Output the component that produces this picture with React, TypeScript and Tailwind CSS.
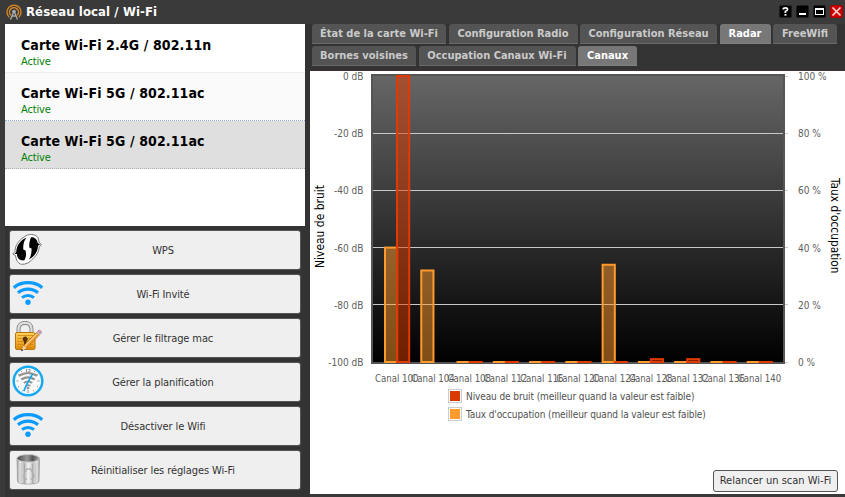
import type { ReactNode } from 'react';

interface Channel {
    name: string;
    noise: number | null; // % of the plot height
    usage: number;
}

const channels: Channel[] = [
    { name: 'Canal 100', noise: 100, usage: 40 },
    { name: 'Canal 104', noise: null, usage: 32 },
    { name: 'Canal 108', noise: 0, usage: 0 },
    { name: 'Canal 112', noise: 0, usage: 0 },
    { name: 'Canal 116', noise: 0, usage: 0 },
    { name: 'Canal 120', noise: 0, usage: 0 },
    { name: 'Canal 124', noise: 0, usage: 34 },
    { name: 'Canal 128', noise: 1, usage: 0 },
    { name: 'Canal 132', noise: 1, usage: 0 },
    { name: 'Canal 136', noise: 0, usage: 0 },
    { name: 'Canal 140', noise: 0, usage: 0 },
];

const cards = [
    { name: 'Carte Wi-Fi 2.4G / 802.11n', row: 'bg-white border-b border-solid border-[#ededed]' },
    { name: 'Carte Wi-Fi 5G / 802.11ac', row: 'bg-[#fafafa] border-b border-dotted border-[#8fb0e8]' },
    { name: 'Carte Wi-Fi 5G / 802.11ac', row: 'bg-[#dfdfdf] border-b border-dotted border-[#b0b0b0]' },
];

const WifiIcon = () => (
    <svg width="32" height="32" viewBox="0 0 32 32" fill="none" stroke="#0c9bff" className="block">
        <path d="M1.800 10.700C9.300 4 22.700 4 30.200 10.700" strokeWidth="3.300" />
        <path d="M6 15.800C12 10.900 20 10.900 26 15.800" strokeWidth="3.200" />
        <path d="M10 20.600C13.500 17.700 18.500 17.700 22 20.600" strokeWidth="3" />
        <circle cx="16" cy="25.200" r="2.700" fill="#0c9bff" stroke="none" />
    </svg>
);

const WpsIcon = () => (
    <svg width="32" height="32" viewBox="0 0 32 32" className="block">
        <path d="M12 4C16 .5 23 .5 26 4.500l1 4.500 2.500 3-2.300 1.500C27 19 24.500 23 20 26.500 18 29.500 14 31.500 9.500 31.300 6 30.500 4.200 27.500 3.500 22.500L.8 21l2.200-2.500C3 12.500 6.500 7.500 12 4Z" fill="#fff" stroke="#777" strokeWidth="1" />
        <path d="M14.500 4.500C8 7.500 4.500 12.500 4.200 19L2.500 21H5C5 25.500 8 28 12.500 27.300 14.200 23.500 14.500 20.500 13.500 17.500L11.300 16.500C11 11.500 12 7.500 14.500 4.500Z" fill="#000" />
        <path d="M19 4.300C17.500 8 17 11.500 17.300 14.500L19.500 15.500C19.800 19.500 19 23 17 26.500 22.500 23.500 26 18.500 26 12.800L28 11.500 25.800 10C25 6 22.500 4 19 4.300Z" fill="#000" />
    </svg>
);

const LockIcon = () => (
    <svg width="32" height="32" viewBox="0 0 32 32" className="block">
        <defs>
            <linearGradient id="lockBody" x1="0" y1="0" x2="0" y2="1">
                <stop offset="0" stopColor="#ffd35e" />
                <stop offset="1" stopColor="#e28a07" />
            </linearGradient>
        </defs>
        <path d="M6.500 13V8.200C6.500 4 9.200 1.900 13 1.900S19.500 4 19.500 8.200V13" fill="none" stroke="#858585" strokeWidth="4" />
        <path d="M6.500 13V8.200C6.500 4 9.200 1.900 13 1.900S19.500 4 19.500 8.200V13" fill="none" stroke="#dedede" strokeWidth="2.200" />
        <rect x="3.500" y="11.500" width="19.500" height="17" rx="1.500" fill="url(#lockBody)" stroke="#b8750c" />
        <path d="M5.500 14.500h15.500M5.500 17.500h15.500M5.500 20.500h15.500M5.500 23.500h15.500M5.500 26.500h15.500" stroke="#cf8409" strokeWidth=".8" />
        <path d="M13.200 15.500a2.500 2.500 0 0 1 1.200 4.700V24H12v-3.800a2.500 2.500 0 0 1 1.200-4.700Z" fill="#593407" />
        <path d="M9.800 29.200l2-4.700L24.500 11.500l2.800 2.600L14 27.500Z" fill="#f5992b" stroke="#9b6018" strokeWidth=".6" />
        <path d="M13 24.800L24.800 12.800" stroke="#ffd790" strokeWidth="1.200" />
        <path d="M9.300 30l2.200-5.300 2.900 2.600Z" fill="#efd8b2" />
        <path d="M9 30.300l.9-2.300 1.400 1.300Z" fill="#222" />
        <path d="M24.300 11.500l1.200-1.200 3 2.700-1.200 1.200Z" fill="#bcbcbc" />
        <path d="M25.500 10.300l1-1.100c1.300-.8 3.500 1 3 2.700l-1 1.100Z" fill="#d998b7" stroke="#a7708a" strokeWidth=".5" />
    </svg>
);

const PlanningIcon = () => (
    <svg width="32" height="32" viewBox="0 0 32 32" fill="none" className="block">
        <circle cx="16" cy="16" r="14.300" fill="#fafafa" stroke="#16aaf0" strokeWidth="2.500" />
        <g stroke="#929292">
            <path d="M7 10.800C12.500 7.300 19.500 7.300 25 10.800" strokeWidth="2.300" />
            <path d="M9.300 14.500C13.500 11.700 18.500 11.700 22.700 14.500" strokeWidth="2.200" />
            <path d="M11.800 18C14.500 16 17.500 16 20.200 18" strokeWidth="2" />
            <path d="M13.500 20.800c1.800-1 3.200-1 5 0" strokeWidth="1.600" />
            <path d="M14.500 4v3M16.300 4.500h1.700v2.200h-1.700M4.500 16h2M25.500 16h2M16 25v3M9 5.700l.8 1.300M23 5.700L22.200 7M6 9.500l1 .8M26 9.500l-1 .8M6 22l1-.6M26 22l-1-.6M10 26.500l.7-1.200M22 26.500l-.7-1.200" strokeWidth="1" />
        </g>
        <circle cx="16" cy="23" r="1.300" fill="#929292" />
        <path d="M20.500 9L15.500 18 11.800 26.200" stroke="#16aaf0" strokeWidth="1.700" />
    </svg>
);

const TrashIcon = () => (
    <svg width="32" height="32" viewBox="0 0 32 32" className="block">
        <defs>
            <linearGradient id="metal">
                <stop offset="0" stopColor="#9a9a9a" />
                <stop offset=".15" stopColor="#eee" />
                <stop offset=".32" stopColor="#b5b5b5" />
                <stop offset=".5" stopColor="#f4f4f4" />
                <stop offset=".72" stopColor="#bcbcbc" />
                <stop offset=".88" stopColor="#efefef" />
                <stop offset="1" stopColor="#999" />
            </linearGradient>
            <linearGradient id="hollow">
                <stop offset="0" stopColor="#444" />
                <stop offset=".45" stopColor="#999" />
                <stop offset=".7" stopColor="#555" />
                <stop offset="1" stopColor="#aaa" />
            </linearGradient>
        </defs>
        <path d="M5 5L5.500 28.500c1 3.500 20.500 3.500 21.500 0L27.500 5Z" fill="url(#metal)" stroke="#999" strokeWidth=".7" />
        <path d="M9 10v19M12.500 11v19.300M20.500 11v19.300M24 10v19" stroke="#8a8a8a" strokeWidth=".4" />
        <ellipse cx="16.200" cy="5.300" rx="11.300" ry="3.800" fill="url(#hollow)" stroke="#c9c9c9" />
        <path d="M13.300 19l1.700-3h3.600l1.700 3M21.300 20.500l.8 3-1.500 2.500h-2M15 26h-2l-1.300-2.500 1-3" fill="none" stroke="#b0b0b0" strokeWidth="1.400" />
    </svg>
);

const AntennaIcon = () => (
    <svg width="16" height="16" viewBox="0 0 16 16" fill="none" className="block">
        <path d="M3.200 13.300A7 7 0 1 1 12.800 13.300" stroke="#cf8125" strokeWidth="1.500" />
        <path d="M4.700 11.300A4.500 4.500 0 1 1 11.300 11.300" stroke="#d8892b" strokeWidth="1.500" />
        <circle cx="8" cy="7.500" r="1.800" fill="#aaa" />
        <path d="M7.600 8L4.500 15.500M8.400 8l3.100 7.500M6.500 12h3" stroke="#a9a9a9" strokeWidth="1.400" />
    </svg>
);

const actions: { label: string; icon: ReactNode }[] = [
    { label: 'WPS', icon: <WpsIcon /> },
    { label: 'Wi-Fi Invité', icon: <WifiIcon /> },
    { label: 'Gérer le filtrage mac', icon: <LockIcon /> },
    { label: 'Gérer la planification', icon: <PlanningIcon /> },
    { label: 'Désactiver le Wifi', icon: <WifiIcon /> },
    { label: 'Réinitialiser les réglages Wi-Fi', icon: <TrashIcon /> },
];

const tabRows = [
    [
        { label: 'État de la carte Wi-Fi', width: 'w-[134px]', active: false },
        { label: 'Configuration Radio', width: 'w-[129px]', active: false },
        { label: 'Configuration Réseau', width: 'w-[137px]', active: false },
        { label: 'Radar', width: 'w-[51px]', active: true },
        { label: 'FreeWifi', width: 'w-[64px]', active: false },
    ],
    [
        { label: 'Bornes voisines', width: 'w-[104px]', active: false },
        { label: 'Occupation Canaux Wi-Fi', width: 'w-[157px]', active: false },
        { label: 'Canaux', width: 'w-[59px]', active: true },
    ],
];

interface TabProps {
    label: string;
    width: string;
    active: boolean;
}

const Tab = ({ label, width, active }: TabProps) => (
    <button
        className={`${width} h-5 shrink-0 rounded-t-[3px] border-b text-[11px] leading-[20px] font-bold whitespace-nowrap ${
            active
                ? 'bg-[#777] border-[#808080] text-white'
                : 'bg-[#545454] border-[#6a6a6a] text-[#cacaca]'
        }`}
    >
        {label}
    </button>
);

const WindowButtons = () => (
    <div className="flex gap-1">
        <button className="size-[13px] rounded-[2px] bg-black border border-[#1c1c1c] text-white">
            <svg width="11" height="11" viewBox="0 0 11 11" fill="none" className="block">
                <path d="M3.200 3.500Q3.200 1.900 5.400 1.900T7.500 3.500Q7.500 4.700 5.400 5.300V7" stroke="#fff" strokeWidth="1.700" />
                <path d="M4.500 8h1.900v1.700H4.500Z" fill="#fff" />
            </svg>
        </button>
        <button className="size-[13px] rounded-[2px] bg-black border border-[#1c1c1c]">
            <svg width="11" height="11" className="block"><path d="M2 7h7v2H2Z" fill="#fff" /></svg>
        </button>
        <button className="size-[13px] rounded-[2px] bg-black border border-[#1c1c1c]">
            <svg width="11" height="11" className="block">
                <path d="M1 2h9v7H1ZM2 4v4h7V4Z" fill="#fff" fillRule="evenodd" />
            </svg>
        </button>
        <button className="size-[13px] rounded-[2px] bg-[#d00000] border border-[#a40000]">
            <svg width="11" height="11" className="block">
                <path d="M1.500 1.500l8 8M9.500 1.500l-8 8" stroke="#ffdcdc" strokeWidth="1.600" />
            </svg>
        </button>
    </div>
);

const TOP = 5;
const BOTTOM = 291;
const STEP = 36.27;

interface BarProps {
    x: number;
    value: number;
    color: string;
}

const Bar = ({ x, value, color }: BarProps) => {
    const y = BOTTOM - ((BOTTOM - TOP) * value) / 100;
    return (
        <rect
            x={x}
            y={y}
            width="12.200"
            height={Math.max(BOTTOM - y, 0.01)}
            fill={color}
            fillOpacity="0.5"
            stroke={color}
            strokeWidth="2"
        />
    );
};

const ChannelChart = () => (
    <svg width="535" height="317" className="block shrink-0">
        <defs>
            <linearGradient id="plot" x1="0" y1="0" x2="0" y2="1">
                <stop offset="0" stopColor="#666" />
                <stop offset="1" stopColor="#000" />
            </linearGradient>
            <clipPath id="plotArea">
                <rect x="63" y="4" width="410" height="288" />
            </clipPath>
        </defs>
        <rect x="62.500" y="4.500" width="412" height="288" fill="url(#plot)" />
        {[0, 1, 2, 3, 4, 5].map((i) => {
            const y = TOP + i * 57.2;
            const line = Math.floor(y) + 0.5;
            return (
                <g key={i} fontSize="10" fill="#606060">
                    {i > 0 && i < 5 && <path d={`M63 ${line}H474`} stroke="#c8c8c8" />}
                    <path d={`M475 ${line}h3`} stroke="#c8c8c8" />
                    <text x="53.500" y={y + 4} textAnchor="end">{`${i === 0 ? 0 : -20 * i} dB`}</text>
                    <text x="488" y={y + 4}>{`${100 - 20 * i} %`}</text>
                </g>
            );
        })}
        <rect x="62" y="4" width="412" height="288" fill="none" stroke="#555" strokeWidth="2" />
        <g clipPath="url(#plotArea)">
            {channels.map((c, i) => (
                <Bar key={c.name} x={75 + i * STEP} value={c.usage} color="#ff9a2c" />
            ))}
            {channels.map((c, i) => (
                c.noise !== null && <Bar key={c.name} x={87 + i * STEP} value={c.noise} color="#e03a00" />
            ))}
        </g>
        {channels.map((c, i) => (
            <text key={c.name} x={65 + i * STEP} y="311" fontSize="10" fill="#606060" textLength="43.500" lengthAdjust="spacingAndGlyphs">
                {c.name}
            </text>
        ))}
        <text transform="translate(14 197) rotate(-90)" fontSize="12" fill="#000" textLength="83" lengthAdjust="spacingAndGlyphs">
            Niveau de bruit
        </text>
        <text transform="translate(521 107) rotate(90)" fontSize="12" fill="#000" textLength="95.500" lengthAdjust="spacingAndGlyphs">
            Taux d'occupation
        </text>
    </svg>
);

const Legend = () => (
    <div className="ml-[138px] mt-px flex flex-col gap-[4px] text-[10px] leading-[14px] tracking-[-0.1px] text-[#505050]">
        <div className="flex h-[14px] items-center gap-[4px] whitespace-nowrap">
            <span className="size-[14px] border border-[#ccc] p-px"><span className="block size-full bg-[#dc3900]" /></span>
            <span className="pt-px">Niveau de bruit (meilleur quand la valeur est faible)</span>
        </div>
        <div className="flex h-[14px] items-center gap-[4px] whitespace-nowrap">
            <span className="size-[14px] border border-[#ccc] p-px"><span className="block size-full bg-[#ff9a2c]" /></span>
            <span className="pt-px">Taux d'occupation (meilleur quand la valeur est faible)</span>
        </div>
    </div>
);

const App = () => {
    return (
        <div className="flex h-[497px] w-[845px] flex-col overflow-hidden bg-[#333] font-['DejaVu_Sans_Condensed','DejaVu_Sans',sans-serif] [font-stretch:condensed]">
            {/* Title bar */}
            <header className="flex h-6 shrink-0 items-center justify-between bg-[#3a3a3a] pb-px pl-1.5 pr-[2px]">
                <div className="flex items-center gap-[4px]">
                    <AntennaIcon />
                    <h1 className="text-[13px] leading-4 font-bold tracking-[0.1px] text-white">Réseau local / Wi-Fi</h1>
                </div>
                <WindowButtons />
            </header>

            <div className="flex min-h-0 grow">
                {/* Card list and actions */}
                <aside className="flex w-[310px] shrink-0 flex-col border-l-[5px] border-[#3a3a3a] pr-[5px]">
                    <ul className="h-[202px] shrink-0 bg-white">
                        {cards.map((card, i) => (
                            <li key={i} className={`flex ${i === 0 ? 'h-[49px] pt-3' : 'h-12 pt-[11px]'} flex-col pl-4 ${card.row}`}>
                                <span className="text-[14px] leading-[18px] font-bold tracking-[0.12px] text-black">{card.name}</span>
                                <span className="mt-px text-[11px] leading-[14px] tracking-[-0.15px] text-[#008000]">Active</span>
                            </li>
                        ))}
                    </ul>
                    <div className="flex flex-col gap-1 pl-1 pr-1 pt-1">
                        {actions.map((action) => (
                            <button
                                key={action.label}
                                className="flex h-10 items-start rounded-[3px] border border-[#555] bg-[#efefef] pl-[2px] pt-[2px] text-[11px] tracking-[-0.1px] text-[#333]"
                            >
                                {action.icon}
                                <span className="grow pr-[18px] text-center leading-[36px]">{action.label}</span>
                            </button>
                        ))}
                    </div>
                </aside>

                {/* Radar panel */}
                <main className="flex grow flex-col">
                    <nav className="flex h-[47px] shrink-0 flex-col gap-[2px] border-b-2 border-[#3a3336] pl-[2px]">
                        {tabRows.map((row, i) => (
                            <div key={i} className="flex gap-[2.500px]">
                                {row.map((tab) => (
                                    <Tab key={tab.label} {...tab} />
                                ))}
                            </div>
                        ))}
                    </nav>
                    <section className="flex grow flex-col bg-white">
                        <ChannelChart />
                        <Legend />
                        <div className="mt-auto flex justify-end pb-[2px] pr-[7px]">
                            <button className="h-[22px] w-[125px] rounded-[3px] border border-[#555] bg-[#efefef] text-[11px] leading-5 whitespace-nowrap text-[#333]">
                                Relancer un scan Wi-Fi
                            </button>
                        </div>
                    </section>
                    <div className="h-[3px] shrink-0 bg-[#3a3a3a]" />
                </main>
            </div>
        </div>
    );
};

export default App;
